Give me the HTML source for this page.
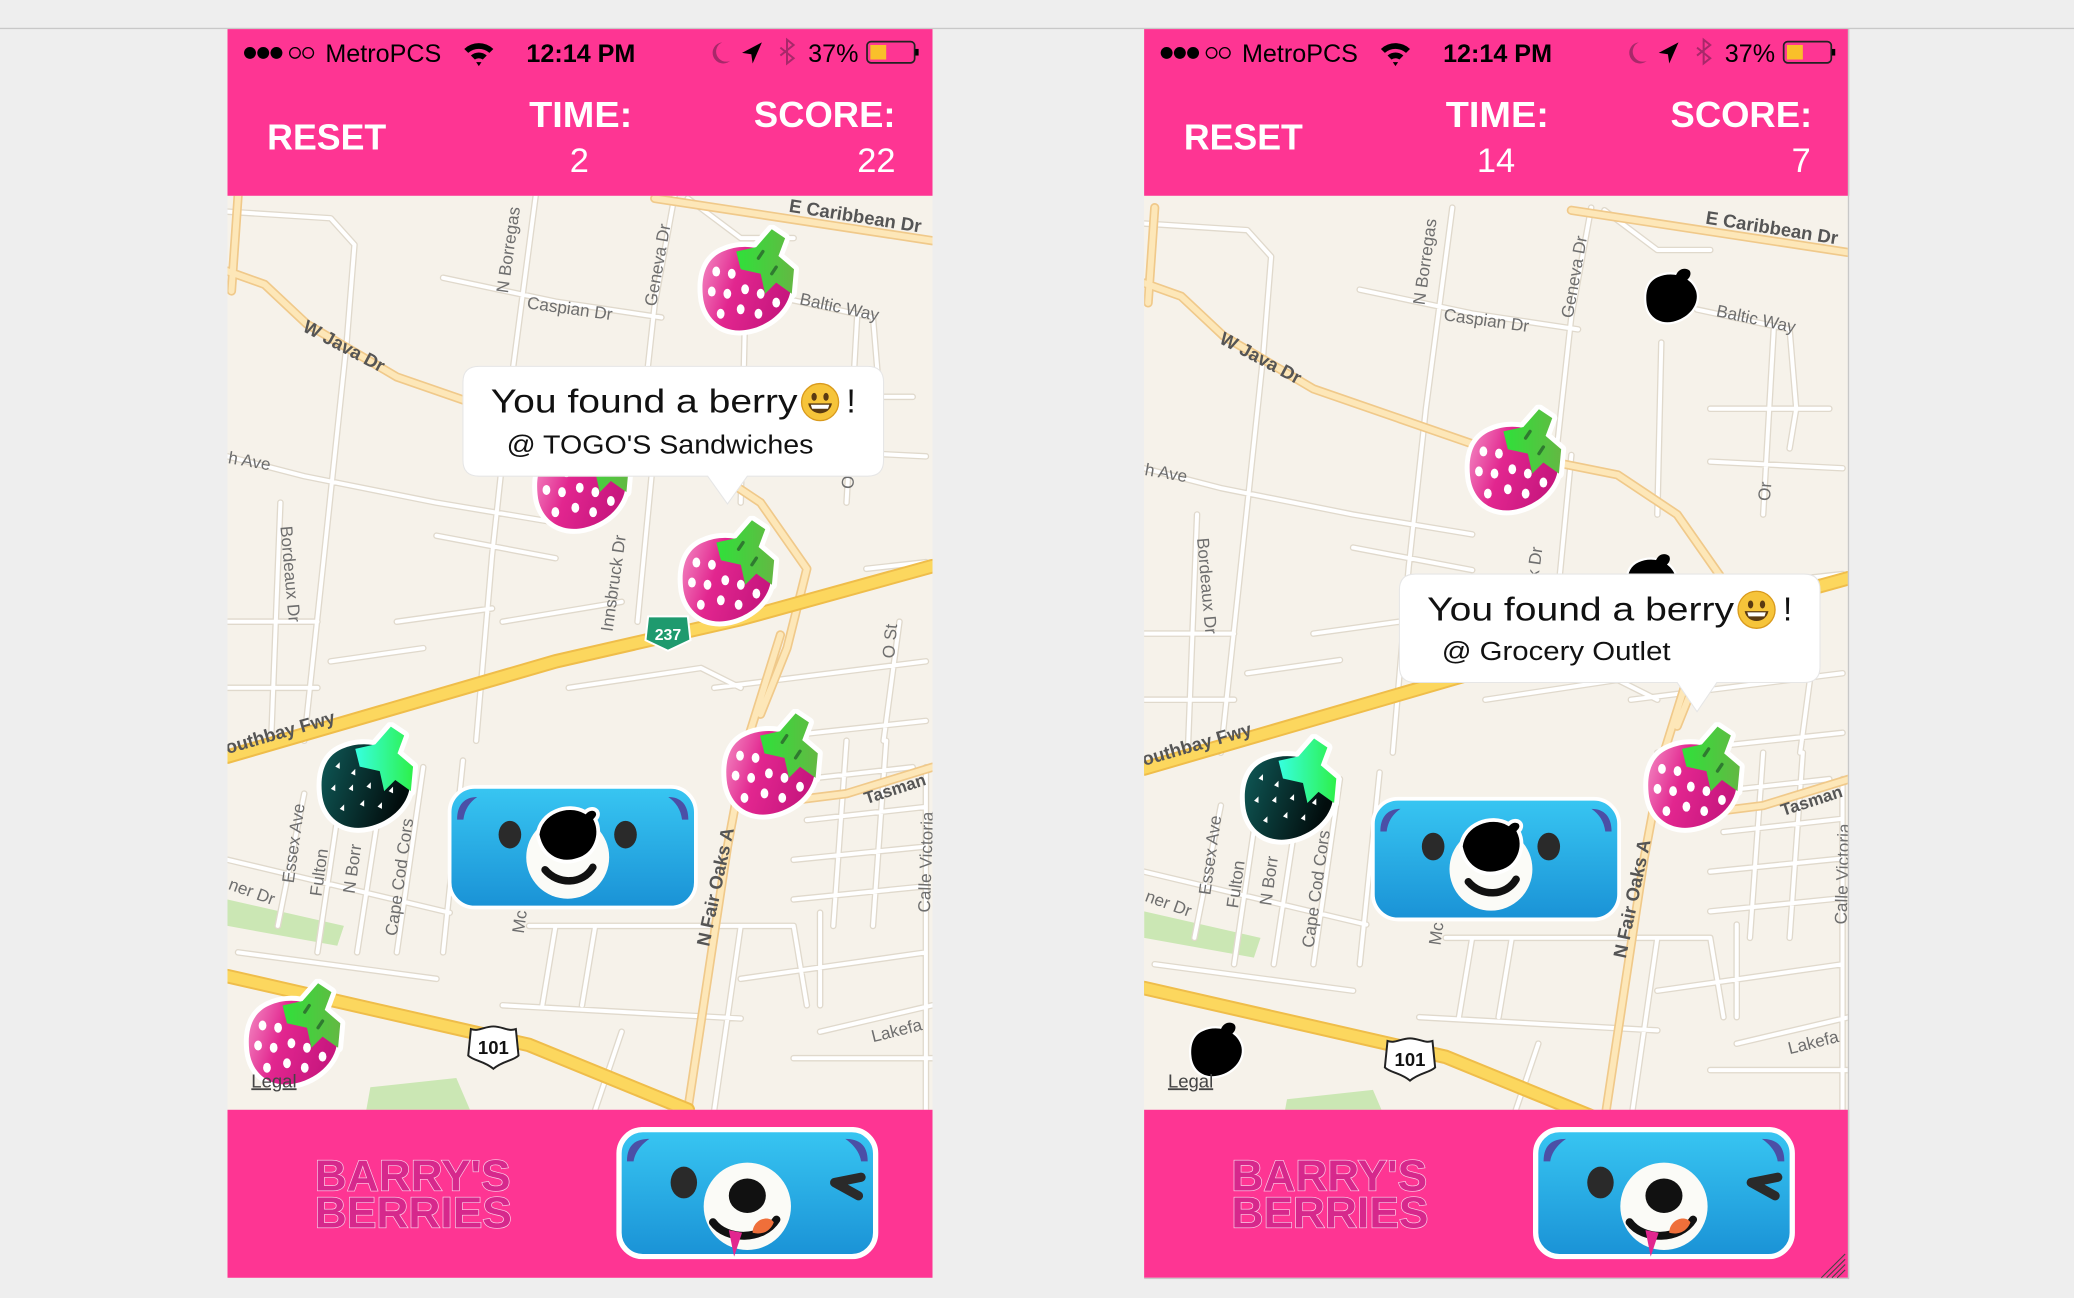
<!DOCTYPE html>
<html><head><meta charset="utf-8">
<style>
html,body{margin:0;padding:0;background:#eeeeee;}
svg{display:block;font-family:"Liberation Sans",sans-serif;}
</style></head>
<body>
<svg width="2074" height="1298" viewBox="0 0 1568 981.3" preserveAspectRatio="none" xmlns="http://www.w3.org/2000/svg">
<defs>
<linearGradient id="pg" x1="0" y1="0" x2="1" y2="0.3"><stop offset="0" stop-color="#f48cc4"/><stop offset="0.45" stop-color="#e2268f"/><stop offset="1" stop-color="#c8177f"/></linearGradient>
<linearGradient id="lg" x1="0" y1="0" x2="1" y2="0"><stop offset="0" stop-color="#2fe13a"/><stop offset="1" stop-color="#63b843"/></linearGradient>
<linearGradient id="dg" x1="0" y1="0" x2="1" y2="0.3"><stop offset="0" stop-color="#0f5a58"/><stop offset="1" stop-color="#020d0d"/></linearGradient>
<linearGradient id="dlg" x1="0" y1="0" x2="1" y2="0"><stop offset="0" stop-color="#36ffe0"/><stop offset="1" stop-color="#2ef04a"/></linearGradient>
<linearGradient id="bg" x1="0" y1="0" x2="0" y2="1"><stop offset="0" stop-color="#38c6f2"/><stop offset="1" stop-color="#1a92d6"/></linearGradient>

<symbol id="pb" viewBox="0 0 100 100">
 <g stroke="#fff" stroke-width="9" stroke-linejoin="round" fill="#fff">
  <path d="M28 24 C50 14 80 22 88 46 C94 66 78 88 52 94 C30 99 12 86 10 64 C8 44 14 30 28 24Z"/>
  <path d="M40 24 L58 20 L72 4 L84 12 L78 28 L92 40 L90 62 L76 52 L66 62 L62 44 L44 40Z"/>
 </g>
 <path d="M28 24 C50 14 80 22 88 46 C94 66 78 88 52 94 C30 99 12 86 10 64 C8 44 14 30 28 24Z" fill="url(#pg)"/>
 <path d="M40 24 L58 20 L72 4 L84 12 L78 28 L92 40 L90 62 L76 52 L66 62 L62 44 L44 40Z" fill="url(#lg)"/>
 <path d="M64 24 L60 30 M76 38 L72 44" stroke="#2f7a30" stroke-width="3" stroke-linecap="round"/>
 <g fill="#fff"><ellipse cx="22" cy="42" rx="3.5" ry="4.5"/><ellipse cx="36" cy="44" rx="3.5" ry="4.5"/><ellipse cx="18" cy="60" rx="3.5" ry="4.5"/><ellipse cx="32" cy="62" rx="3.5" ry="4.5"/><ellipse cx="48" cy="58" rx="3.5" ry="4.5"/><ellipse cx="62" cy="62" rx="3.5" ry="4.5"/><ellipse cx="26" cy="80" rx="3.5" ry="4.5"/><ellipse cx="44" cy="76" rx="3.5" ry="4.5"/><ellipse cx="60" cy="80" rx="3.5" ry="4.5"/><ellipse cx="76" cy="70" rx="3.5" ry="4.5"/></g>
</symbol>
<symbol id="db" viewBox="0 0 100 100">
 <g stroke="#fff" stroke-width="9" stroke-linejoin="round" fill="#fff">
  <path d="M28 24 C50 14 80 22 88 46 C94 66 78 88 52 94 C30 99 12 86 10 64 C8 44 14 30 28 24Z"/>
  <path d="M40 24 L58 20 L72 4 L84 12 L78 28 L92 40 L90 62 L76 52 L66 62 L62 44 L44 40Z"/>
 </g>
 <path d="M28 24 C50 14 80 22 88 46 C94 66 78 88 52 94 C30 99 12 86 10 64 C8 44 14 30 28 24Z" fill="url(#dg)"/>
 <path d="M40 24 L58 20 L72 4 L84 12 L78 28 L92 40 L90 62 L76 52 L66 62 L62 44 L44 40Z" fill="url(#dlg)"/>
 <g fill="#fff"><path d="M22 40 l4 -4 l0 6z M36 46 l4 -4 l0 6z M18 60 l4 -4 l0 6z M34 60 l4 -4 l0 6z M50 58 l4 -4 l0 6z M26 78 l4 -4 l0 6z M44 74 l4 -4 l0 6z M60 76 l4 -4 l0 6z M70 62 l4 -4 l0 6z"/></g>
</symbol>
<symbol id="bk" viewBox="0 0 100 100">
 <g stroke="#fff" stroke-width="7" stroke-linejoin="round" fill="#fff">
  <path d="M28 24 C50 14 80 22 88 46 C94 66 78 88 52 94 C30 99 12 86 10 64 C8 44 14 30 28 24Z"/>
 </g>
 <path d="M28 24 C50 14 80 22 88 46 C94 66 78 88 52 94 C30 99 12 86 10 64 C8 44 14 30 28 24Z" fill="#000"/>
 <path d="M56 22 C60 10 72 8 78 14 C82 20 76 30 68 30Z" fill="#000"/>
</symbol>
<symbol id="bear" viewBox="0 0 200 100">
 <rect x="2" y="2" width="196" height="96" rx="20" fill="url(#bg)" stroke="#fff" stroke-width="3"/>
 <path d="M8 28 C8 16 14 10 24 10 C18 14 14 20 13 28Z" fill="#4b4fa6"/>
 <path d="M192 28 C192 16 186 10 176 10 C182 14 186 20 187 28Z" fill="#4b4fa6"/>
 <ellipse cx="50" cy="40" rx="9" ry="11" fill="#2a2a2a"/>
 <ellipse cx="142" cy="40" rx="9" ry="11" fill="#2a2a2a"/>
 <ellipse cx="96" cy="58" rx="33" ry="33" fill="#fbfbf7"/>
 <path d="M72 40 C74 22 96 14 110 22 C116 16 124 22 118 28 C124 40 118 56 104 60 C92 64 76 60 72 40Z" fill="#000" stroke="#fff" stroke-width="3"/>
 <path d="M78 68 C88 80 108 80 116 66" stroke="#111" stroke-width="6" fill="none" stroke-linecap="round"/>
</symbol>
<symbol id="wbear" viewBox="0 0 200 100">
 <rect x="3" y="2" width="194" height="96" rx="18" fill="url(#bg)" stroke="#fff" stroke-width="4"/>
 <path d="M9 26 C9 14 15 9 26 9 C20 13 15 19 14 26Z" fill="#4b4fa6"/>
 <path d="M191 26 C191 14 185 9 174 9 C180 13 185 19 186 26Z" fill="#4b4fa6"/>
 <ellipse cx="52" cy="42" rx="10" ry="12" fill="#2a2a2a"/>
 <path d="M186 38 L166 42 L184 52" stroke="#2a2a2a" stroke-width="7" fill="none" stroke-linecap="round" stroke-linejoin="round"/>
 <ellipse cx="100" cy="60" rx="33" ry="33" fill="#fbfbf7"/>
 <ellipse cx="100" cy="52" rx="14" ry="13" fill="#111"/>
 <path d="M74 72 C84 86 112 86 122 70" stroke="#111" stroke-width="6" fill="none" stroke-linecap="round"/>
 <path d="M104 80 C104 70 116 66 120 72 C118 78 112 82 104 80Z" fill="#ef6f3a"/>
 <path d="M86 78 L90 98 L96 80Z" fill="#e2268f"/>
</symbol>
<symbol id="emo" viewBox="0 0 30 30">
 <circle cx="15" cy="15" r="14" fill="#f6c43a" stroke="#d99a1d" stroke-width="1"/>
 <ellipse cx="10.5" cy="11" rx="2" ry="3" fill="#5a3a12"/><ellipse cx="19.5" cy="11" rx="2" ry="3" fill="#5a3a12"/>
 <path d="M6 16 C8 26 22 26 24 16Z" fill="#5a3a12"/><path d="M8 17 L22 17 L21 20 L9 20Z" fill="#fff"/>
</symbol>

<g id="map">
 <rect x="150" y="130" width="600" height="720" fill="#f6f2ea"/>
 <path d="M172 680 L260 700 L255 715 L172 700Z M280 822 L345 815 L360 850 L275 850Z" fill="#cbe7b4"/>
 <g fill="none" stroke-linecap="round" stroke-linejoin="round">
  <g stroke="#e0d9cc" stroke-width="5">
   <path d="M405 148 L385 300 L372 420 L360 560 M510 148 L495 230 L484 330 M495 335 L482 470 M563 250 L560 380 M648 240 L640 380 M335 210 L420 228 L500 240 M590 225 L660 240 L665 300 L660 330 M172 160 L250 165 L268 185 L262 260 L245 420 L230 560 M172 345 L230 360 L330 380 L420 395 M212 380 L205 560 M330 405 L420 422 M680 470 L668 560 M700 580 L700 839 M620 780 L705 760 M560 740 L700 720 M230 600 L210 700 M258 598 L240 720 M290 590 L270 720 M320 580 L300 720 M350 575 L335 720 M172 650 L340 690 M180 720 L330 740 M400 700 L600 700 L610 760 M420 700 L410 760 M450 700 L440 760 M380 760 L560 770 M540 520 L700 500 M560 560 L700 545 M600 590 L690 580 M610 620 L700 610 M600 650 L700 640 M600 680 L700 670 M640 560 L630 700 M670 560 L660 700 M620 690 L620 760 M560 700 L540 839 M450 839 L470 780 M600 800 L705 800 M430 520 L530 505 L560 520 M380 470 L470 455 M300 470 L372 460 M250 500 L320 490 M600 300 L690 300 M600 340 L700 345 M655 430 L700 425 M520 150 L560 180 L600 180 M172 470 L240 470 M172 520 L240 520"/>
  </g>
  <path d="M405 148 L385 300 L372 420 L360 560 M510 148 L495 230 L484 330 M495 335 L482 470 M563 250 L560 380 M648 240 L640 380 M335 210 L420 228 L500 240 M590 225 L660 240 L665 300 L660 330 M172 160 L250 165 L268 185 L262 260 L245 420 L230 560 M172 345 L230 360 L330 380 L420 395 M212 380 L205 560 M330 405 L420 422 M680 470 L668 560 M700 580 L700 839 M620 780 L705 760 M560 740 L700 720 M230 600 L210 700 M258 598 L240 720 M290 590 L270 720 M320 580 L300 720 M350 575 L335 720 M172 650 L340 690 M180 720 L330 740 M400 700 L600 700 L610 760 M420 700 L410 760 M450 700 L440 760 M380 760 L560 770 M540 520 L700 500 M560 560 L700 545 M600 590 L690 580 M610 620 L700 610 M600 650 L700 640 M600 680 L700 670 M640 560 L630 700 M670 560 L660 700 M620 690 L620 760 M560 700 L540 839 M450 839 L470 780 M600 800 L705 800 M430 520 L530 505 L560 520 M380 470 L470 455 M300 470 L372 460 M250 500 L320 490 M600 300 L690 300 M600 340 L700 345 M655 430 L700 425 M520 150 L560 180 L600 180 M172 470 L240 470 M172 520 L240 520" stroke="#ffffff" stroke-width="3"/>
  <g stroke="#f0c98a" stroke-width="7"><path d="M172 205 L200 215 L232 245 L300 285 L430 330 L530 350 L575 380 L610 430 L595 490 L575 540 M495 150 L705 182 M590 480 L565 560 L550 640 L520 839 M600 605 L640 600 L705 580 M180 148 L175 220"/></g>
  <g stroke="#fde7b8" stroke-width="4.5"><path d="M172 205 L200 215 L232 245 L300 285 L430 330 L530 350 L575 380 L610 430 L595 490 L575 540 M495 150 L705 182 M590 480 L565 560 L550 640 L520 839 M600 605 L640 600 L705 580 M180 148 L175 220"/></g>
  <g stroke="#efbd4a" stroke-width="11"><path d="M172 572 L420 500 L560 468 L705 428 M172 738 L400 790 L520 839"/></g>
  <g stroke="#fcd75e" stroke-width="8"><path d="M172 572 L420 500 L560 468 L705 428 M172 738 L400 790 L520 839"/></g>
 </g>
 <g fill="#6e6e6e" font-size="13">
  <text x="596" y="160" transform="rotate(9 596 160)" font-weight="bold" font-size="14" fill="#555">E Caribbean Dr</text>
  <text x="398" y="233" transform="rotate(8 398 233)">Caspian Dr</text>
  <text x="228" y="250" transform="rotate(28 228 250)" font-weight="bold" font-size="14" fill="#555">W Java Dr</text>
  <text x="604" y="230" transform="rotate(12 604 230)">Baltic Way</text>
  <text x="384" y="222" transform="rotate(-82 384 222)">N Borregas</text>
  <text x="496" y="232" transform="rotate(-80 496 232)">Geneva Dr</text>
  <text x="172" y="350" transform="rotate(10 172 350)">h Ave</text>
  <text x="212" y="398" transform="rotate(85 212 398)">Bordeaux Dr</text>
  <text x="463" y="478" transform="rotate(-82 463 478)">Innsbruck Dr</text>
  <text x="645" y="370" transform="rotate(-85 645 370)">Or</text>
  <text x="676" y="498" transform="rotate(-85 676 498)">O St</text>
  <text x="172" y="570" transform="rotate(-16 172 570)" font-weight="bold" font-size="14" fill="#555">outhbay Fwy</text>
  <text x="655" y="608" transform="rotate(-18 655 608)" font-weight="bold" fill="#555">Tasman</text>
  <text x="536" y="716" transform="rotate(-78 536 716)" font-weight="bold" font-size="14" fill="#555">N Fair Oaks A</text>
  <text x="222" y="668" transform="rotate(-82 222 668)">Essex Ave</text>
  <text x="243" y="678" transform="rotate(-82 243 678)">Fulton</text>
  <text x="268" y="676" transform="rotate(-82 268 676)">N Borr</text>
  <text x="300" y="708" transform="rotate(-82 300 708)">Cape Cod Cors</text>
  <text x="703" y="690" transform="rotate(-88 703 690)">Calle Victoria</text>
  <text x="172" y="672" transform="rotate(20 172 672)">ner Dr</text>
  <text x="396" y="706" transform="rotate(-82 396 706)">Mc</text>
  <text x="660" y="788" transform="rotate(-14 660 788)">Lakefa</text>
 </g>
 <path d="M490 466 L520 466 L522 484 L505 492 L488 484Z" fill="#1e9a6e" stroke="#fff" stroke-width="1.5"/>
 <text x="505" y="484" font-size="12" font-weight="bold" fill="#fff" text-anchor="middle">237</text>
 <path d="M356 778 C362 780 366 776 373 776 C380 776 384 780 390 778 L392 798 C388 802 380 802 373 808 C366 802 358 802 354 798Z" fill="#fff" stroke="#222" stroke-width="1.5"/>
 <text x="373" y="797" font-size="14" font-weight="bold" fill="#111" text-anchor="middle">101</text>
</g>

<g id="chrome">
 <rect x="172" y="22" width="533" height="126" fill="#fe3593"/>
 <rect x="172" y="839" width="533" height="127" fill="#fe3593"/>
 <g fill="#000">
  <circle cx="189" cy="40" r="4.5"/><circle cx="199" cy="40" r="4.5"/><circle cx="209" cy="40" r="4.5"/>
  <circle cx="223" cy="40" r="4" fill="none" stroke="#000" stroke-width="1"/><circle cx="233" cy="40" r="4" fill="none" stroke="#000" stroke-width="1"/>
  <text x="246" y="47" font-size="19">MetroPCS</text>
  <path d="M351 37 A16 16 0 0 1 373 37 L370 40 A12 12 0 0 0 354 40Z M356 42 A9 9 0 0 1 368 42 L365 45 A5 5 0 0 0 359 45Z M360 47 L364 47 L362 50Z"/>
  <text x="398" y="47" font-size="19" font-weight="bold">12:14 PM</text>
  <path d="M546 32 A8 8 0 1 0 552 46 A7 7 0 0 1 546 32Z" fill="#a8286a"/>
  <path d="M576 32 L561 40 L568 41 L569 48Z"/>
  <path d="M590 36 L600 44 L595 48 L595 30 L600 34 L590 42" fill="none" stroke="#a8286a" stroke-width="1.5"/>
  <text x="611" y="47" font-size="19">37%</text>
  <rect x="655.5" y="31.5" width="36" height="16" rx="3" fill="none" stroke="#222" stroke-width="1.3"/>
  <rect x="658" y="34" width="12" height="11" fill="#f9c02a"/>
  <rect x="692" y="37" width="2.5" height="5"/>
 </g>
 <g fill="#fff" font-weight="bold" font-size="27">
  <text x="202" y="113" textLength="90" lengthAdjust="spacingAndGlyphs">RESET</text>
  <text x="400" y="96" textLength="78" lengthAdjust="spacingAndGlyphs">TIME:</text>
  <text x="570" y="96" textLength="107" lengthAdjust="spacingAndGlyphs">SCORE:</text>
 </g>
 <g font-weight="bold" font-size="33" fill="#d6288c" stroke="#fbd0e8" stroke-width="1" paint-order="stroke">
  <text x="238" y="900" textLength="148" lengthAdjust="spacingAndGlyphs">BARRY'S</text>
  <text x="238" y="928" textLength="149" lengthAdjust="spacingAndGlyphs">BERRIES</text>
 </g>
 <use href="#wbear" x="465" y="852" width="200" height="100"/>
</g>
<clipPath id="cl"><rect x="172" y="148" width="533" height="691"/></clipPath>
<clipPath id="cr"><rect x="865" y="148" width="532" height="691"/></clipPath>
</defs>

<rect width="1568" height="982" fill="#eeeeee"/>
<rect x="0" y="21" width="1568" height="1" fill="#c8c8c8"/>

<!-- LEFT PHONE -->
<g clip-path="url(#cl)">
 <use href="#map"/>
 <use href="#pb" x="523" y="170" width="84" height="84"/>
 <use href="#pb" x="398" y="320" width="84" height="84"/>
 <use href="#pb" x="508" y="390" width="84" height="84"/>
 <use href="#pb" x="541" y="536" width="84" height="84"/>
 <use href="#pb" x="180" y="740" width="84" height="84"/>
 <use href="#db" x="235" y="546" width="84" height="84"/>
 <use href="#bear" x="336" y="593" width="194" height="95"/>
 <text x="190" y="822" font-size="14" fill="#444" text-decoration="underline">Legal</text>
 <g>
  <path d="M362 277 L656 277 Q668 277 668 289 L668 348 Q668 360 656 360 L565 360 L550 381 L535 360 L362 360 Q350 360 350 348 L350 289 Q350 277 362 277Z" fill="#fff" stroke="#e6e6e6" stroke-width="0.8"/>
  <text x="371" y="312" font-size="25" fill="#111" textLength="232" lengthAdjust="spacingAndGlyphs">You found a berry</text>
  <use href="#emo" x="605" y="289" width="30" height="30"/>
  <text x="640" y="312" font-size="25" fill="#111">!</text>
  <text x="383" y="343" font-size="19.5" fill="#111" textLength="232" lengthAdjust="spacingAndGlyphs">@ TOGO'S Sandwiches</text>
 </g>
</g>
<use href="#chrome"/>
<g fill="#fff" font-size="26">
 <text x="438" y="130" text-anchor="middle">2</text>
 <text x="677" y="130" text-anchor="end">22</text>
</g>

<!-- RIGHT PHONE -->
<g clip-path="url(#cr)">
 <rect x="865" y="148" width="532" height="691" fill="#f6f2ea"/>
 <use href="#map" transform="translate(693 9)"/>
 <use href="#bk" x="1240" y="198" width="48" height="48"/>
 <use href="#pb" x="1103" y="306" width="84" height="84"/>
 <use href="#bk" x="1226" y="414" width="46" height="46"/>
 <use href="#db" x="933" y="555" width="84" height="84"/>
 <use href="#pb" x="1238" y="546" width="84" height="84"/>
 <use href="#bk" x="896" y="768" width="48" height="48"/>
 <use href="#bear" x="1034" y="602" width="194" height="95"/>
 <text x="883" y="822" font-size="14" fill="#444" text-decoration="underline">Legal</text>
 <g>
  <path d="M1070 434 L1364 434 Q1376 434 1376 446 L1376 504 Q1376 516 1364 516 L1298 516 L1283 538 L1268 516 L1070 516 Q1058 516 1058 504 L1058 446 Q1058 434 1070 434Z" fill="#fff" stroke="#e6e6e6" stroke-width="0.8"/>
  <text x="1079" y="469" font-size="25" fill="#111" textLength="232" lengthAdjust="spacingAndGlyphs">You found a berry</text>
  <use href="#emo" x="1313" y="446" width="30" height="30"/>
  <text x="1348" y="469" font-size="25" fill="#111">!</text>
  <text x="1090" y="499" font-size="19.5" fill="#111" textLength="173" lengthAdjust="spacingAndGlyphs">@ Grocery Outlet</text>
 </g>
</g>
<use href="#chrome" transform="translate(693 0)"/>
<g fill="#fff" font-size="26">
 <text x="1131" y="130" text-anchor="middle">14</text>
 <text x="1369" y="130" text-anchor="end">7</text>
</g>
<rect x="1397" y="22" width="1" height="945" fill="#c8c8c8"/>
<rect x="865" y="966" width="533" height="1" fill="#c8c8c8"/>
<g stroke="#444" stroke-width="0.8"><path d="M1395 952 L1381 966 M1395 956 L1385 966 M1395 960 L1389 966 M1395 948 L1377 966"/></g>
</svg>
</body></html>
